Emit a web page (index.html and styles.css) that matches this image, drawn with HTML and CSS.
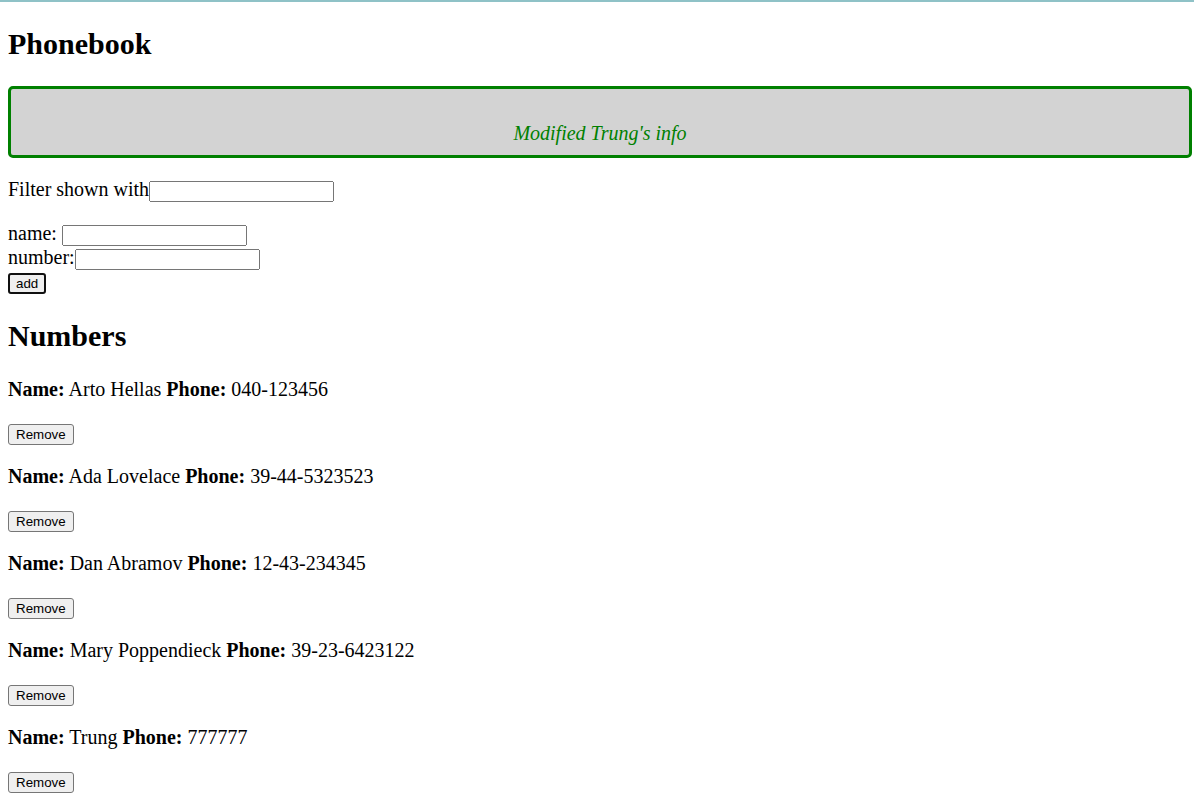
FILE: index.html
```html
<!DOCTYPE html>
<html>
<head>
<meta charset="utf-8">
<title>Phonebook</title>
<link rel="stylesheet" href="styles.css">
</head>
<body>
<div class="app">
  <h2 class="title">Phonebook</h2>
  <div class="notification"><br>Modified Trung's info</div>
  <p class="filter">Filter shown with<input class="field"></p>
  <form class="add-form">
    <div class="row">name: <input class="field"></div>
    <div class="row">number:<input class="field"></div>
    <div class="row"><button type="submit" class="add-btn">add</button></div>
  </form>
  <h2 class="title">Numbers</h2>
  <div class="person">
    <p class="entry"><b>Name:</b> Arto Hellas <b>Phone:</b> 040-123456</p>
    <div class="actions"><button class="remove-btn">Remove</button></div>
  </div>
  <div class="person">
    <p class="entry"><b>Name:</b> Ada Lovelace <b>Phone:</b> 39-44-5323523</p>
    <div class="actions"><button class="remove-btn">Remove</button></div>
  </div>
  <div class="person">
    <p class="entry"><b>Name:</b> Dan Abramov <b>Phone:</b> 12-43-234345</p>
    <div class="actions"><button class="remove-btn">Remove</button></div>
  </div>
  <div class="person">
    <p class="entry"><b>Name:</b> Mary Poppendieck <b>Phone:</b> 39-23-6423122</p>
    <div class="actions"><button class="remove-btn">Remove</button></div>
  </div>
  <div class="person">
    <p class="entry"><b>Name:</b> Trung <b>Phone:</b> 777777</p>
    <div class="actions"><button class="remove-btn">Remove</button></div>
  </div>
</div>
</body>
</html>
```
FILE: styles.css
```css
html {
  background: linear-gradient(#8fc2c7, #8fc2c7) top left / 100% 2px no-repeat, #fff;
}
body {
  margin: 0;
  padding: 2px 2px 8px 8px;
  font-family: "Liberation Serif", "Times New Roman", serif;
  font-size: 20px;
  color: #000;
}
.title {
  font-size: 1.5em;
  margin: 0.83em 0;
  font-weight: bold;
}
.notification {
  color: green;
  background: lightgrey;
  font-size: 20px;
  font-style: italic;
  text-align: center;
  border: 3px solid green;
  border-radius: 5px;
  padding: 10px;
  margin-bottom: 10px;
}
.filter {
  margin: 20px 0;
}
.add-form {
  margin: 0;
}
.field {
  font-family: Arial, "Liberation Sans", sans-serif;
}
.add-btn {
  font-family: Arial, "Liberation Sans", sans-serif;
  font-size: 13.333px;
  border: 2px solid #101010;
  border-radius: 3px;
  background: #efefef;
  padding: 1px 6px;
  color: #000;
}
.entry {
  margin: 20px 0;
}
.remove-btn {
  font-family: Arial, "Liberation Sans", sans-serif;
  font-size: 13.333px;
  background: #efefef;
  border: 1px solid #767676;
  border-radius: 3px;
  padding: 2px 7px;
  color: #000;
}
```
